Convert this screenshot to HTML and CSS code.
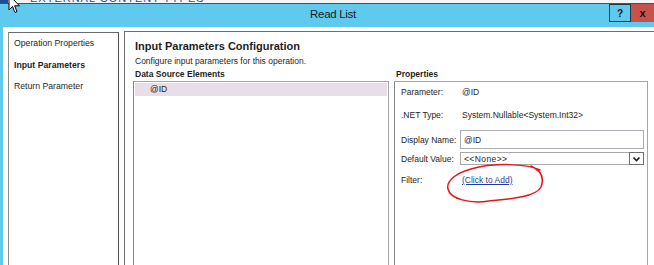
FILE: index.html
```html
<!DOCTYPE html>
<html lang="en">
  <head>
    <meta charset="UTF-8" />
    <meta name="viewport" content="width=device-width, initial-scale=1.0" />
    <title>Read List</title>
    <link rel="stylesheet" href="styles.css">
  </head>

  <body>
    <div id="desktop">
      <div class="desktopIcon"></div>
      <span class="desktopText">EXTERNAL CONTENT TYPES</span>
    </div>

    <div id="dialog">
      <div id="titleBar">
        <div class="title">Read List</div>
        <div class="captionButtons">
          <div class="helpButton">?</div>
          <div class="closeButton">x</div>
        </div>
      </div>

      <div id="client">
        <div id="navPanel">
          <div class="navItem">Operation Properties</div>
          <div class="navItem active">Input Parameters</div>
          <div class="navItem">Return Parameter</div>
        </div>

        <div id="mainPanel">
          <h1>Input Parameters Configuration</h1>
          <p class="subtitle">Configure input parameters for this operation.</p>
          <div class="columns">
            <div class="column sourceColumn">
              <div class="sectionLabel">Data Source Elements</div>
              <div class="listBox">
                <div class="listItem selected">@ID</div>
              </div>
            </div>
            <div class="column propColumn">
              <div class="sectionLabel">Properties</div>
              <div class="propBox">
                <div class="propRow">
                  <span class="propLabel">Parameter:</span>
                  <span class="propValue">@ID</span>
                </div>
                <div class="propRow">
                  <span class="propLabel">.NET Type:</span>
                  <span class="propValue">System.Nullable&lt;System.Int32&gt;</span>
                </div>
                <div class="propRow inputRow">
                  <span class="propLabel">Display Name:</span>
                  <div class="textInput">@ID</div>
                </div>
                <div class="propRow selectRow">
                  <span class="propLabel">Default Value:</span>
                  <div class="selectBox">
                    <span class="selectText">&lt;&lt;None&gt;&gt;</span>
                    <span class="dropButton">
                      <svg width="9" height="6" viewBox="0 0 9 6">
                        <path d="M1.5 1.5 L4.5 4.5 L7.5 1.5" fill="none" stroke="#1a1a1a" stroke-width="1.6" />
                      </svg>
                    </span>
                  </div>
                </div>
                <div class="propRow filterRow">
                  <span class="propLabel">Filter:</span>
                  <a class="propValue addLink" href="#">(Click to Add)</a>
                </div>
              </div>
            </div>
          </div>
        </div>
      </div>
    </div>

    <!-- hand drawn annotation round the filter link -->
    <svg class="annotation" width="112" height="48" viewBox="0 0 112 48">
      <path d="M100 9 C86 2 52 2 31 8 C16 12 6 20 8 28 C10 38 30 43 49 40 C71 38 96 36 101 26 C104 18 102 10 91 5"
            fill="none" stroke="#e3161c" stroke-width="1.5" stroke-linecap="round" />
    </svg>

    <svg class="cursor" width="14" height="20" viewBox="0 0 14 20">
      <path d="M1 0 L1 15 L4.5 11.5 L7 17.5 L9 16.6 L6.6 10.8 L11.5 10.8 Z"
            fill="#fff" stroke="#000" stroke-width="1" stroke-linejoin="round" />
    </svg>
  </body>
</html>
```

FILE: styles.css
```css
html,
body {
  margin: 0;
  height: 100%;
  overflow: hidden;
}

body {
  font-family: "Liberation Sans", Arial, sans-serif;
  font-size: 8.5px;
  color: #1e1e1e;
  background-color: #5fcaed;
  display: flex;
  flex-direction: column;
}

#desktop {
  height: 3px;
  overflow: hidden;
  background-color: #f3f5f7;
  display: flex;
  align-items: flex-end;
}

.desktopIcon {
  width: 8px;
  height: 3px;
  background-color: #1d4f8c;
}

.desktopText {
  margin-left: 22px;
  margin-bottom: -1px;
  font-size: 11px;
  line-height: 11px;
  letter-spacing: 1px;
  color: #2b5797;
}

#dialog {
  flex: 1;
  min-height: 0;
  display: flex;
  flex-direction: column;
  border-top: 1px solid #3b5561;
  padding-left: 3px;
  background-color: #5fcaed;
}

#titleBar {
  height: 23px;
  display: grid;
  grid-template-columns: 1fr auto 1fr;
  align-items: start;
}

.title {
  grid-column: 2;
  padding-left: 9px;
  font-size: 11.5px;
  letter-spacing: -0.3px;
  line-height: 21px;
  color: #1a1a1a;
}

.captionButtons {
  grid-column: 3;
  justify-self: end;
  display: flex;
}

.helpButton,
.closeButton {
  height: 18px;
  box-sizing: border-box;
  display: flex;
  align-items: center;
  justify-content: center;
  font-weight: bold;
  font-size: 10px;
  color: #111;
}

.helpButton {
  width: 22px;
  border: 1px solid #1f3a46;
}

.closeButton {
  width: 23px;
  background-color: #c7514c;
  font-size: 11px;
}

#client {
  flex: 1;
  min-height: 0;
  display: flex;
  padding: 4px 0 0 5px;
  background-color: #fff;
  overflow: hidden;
}

#navPanel {
  width: 104px;
  flex: none;
  margin-top: 1px;
  padding-left: 5px;
  border: 1px solid #8c8c8c;
  border-top-color: #6a6a6a;
  border-right-color: #4e4e4e;
  border-bottom: none;
}

.navItem {
  line-height: 21.5px;
  font-size: 8.7px;
  white-space: nowrap;
}

.navItem.active {
  font-weight: bold;
}

#mainPanel {
  flex: 1;
  min-width: 0;
  margin-left: 5px;
  margin-right: -10px;
  padding: 7px 0 0 8px;
  display: flex;
  flex-direction: column;
  border: 1px solid #6d6d6d;
  border-bottom: none;
}

h1 {
  margin: 0;
  padding-left: 2px;
  font-size: 11px;
  line-height: 14px;
  font-weight: bold;
}

.subtitle {
  margin: 2px 0 0;
  padding-left: 2px;
  line-height: 12px;
}

.sectionLabel {
  margin: 1px 0 1px;
  padding-left: 2px;
  line-height: 12px;
  font-weight: bold;
}

.columns {
  flex: 1;
  display: flex;
  gap: 5px;
}

.column {
  display: flex;
  flex-direction: column;
}

.sourceColumn {
  width: 256px;
}

.propColumn {
  width: 254px;
}

.listBox {
  flex: 1;
  padding: 1px;
  border: 1px solid #a6a6a6;
  border-left-color: #858585;
  border-bottom: none;
}

.listItem {
  height: 13px;
  line-height: 13px;
  padding-left: 15px;
}

.listItem.selected {
  background-color: #e7dee7;
}

.propBox {
  flex: 1;
  padding: 3px 3px 0 6px;
  border: 1px solid #a6a6a6;
  border-left-color: #858585;
  border-bottom: none;
}

.propRow {
  height: 14px;
  margin-top: 9px;
  display: flex;
  align-items: center;
}

.propRow:first-child {
  margin-top: 0;
}

.propRow.inputRow {
  height: 19px;
  margin-top: 8px;
}

.propRow.selectRow {
  height: 13px;
  margin-top: 3px;
}

.propRow.filterRow {
  margin-top: 8px;
}

.propLabel {
  width: 59px;
  flex: none;
  white-space: nowrap;
}

.propValue {
  padding-left: 2px;
}

.textInput {
  flex: 1;
  height: 19px;
  box-sizing: border-box;
  padding-left: 3px;
  display: flex;
  align-items: center;
  border: 1px solid #abadb3;
}

.selectBox {
  flex: 1;
  height: 13px;
  box-sizing: border-box;
  padding-left: 3px;
  display: flex;
  align-items: center;
  justify-content: space-between;
  border: 1px solid #a9a9a9;
}

.selectText {
  letter-spacing: 0.4px;
}

.dropButton {
  width: 15px;
  height: 13px;
  margin-right: -1px;
  box-sizing: border-box;
  display: flex;
  align-items: center;
  justify-content: center;
  border: 1px solid #6f6f6f;
}

.addLink {
  color: #1f3c96;
  text-decoration: underline;
}

.annotation {
  position: absolute;
  left: 440px;
  top: 161px;
}

.cursor {
  position: absolute;
  left: 8px;
  top: -5px;
}
```
